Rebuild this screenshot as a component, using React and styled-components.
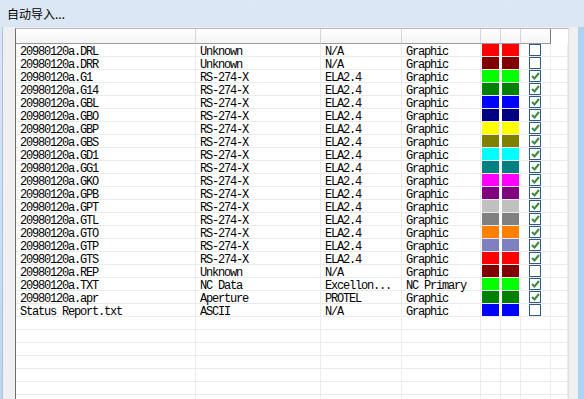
import React from "react";
import styled, { createGlobalStyle } from "styled-components";

const GlobalStyle = createGlobalStyle`
  html, body {
    margin: 0;
    padding: 0;
    background: #ffffff;
  }
`;

const COLS = "180px 125px 81px 79px 20px 20px 30px 1fr";

const Window = styled.div`
  width: 584px;
  height: 399px;
  overflow: hidden;
  display: flex;
  flex-direction: column;
  background: linear-gradient(#dde8f5, #c0d5ec);
`;

const TitleBar = styled.div`
  height: 27px;
  flex: 0 0 auto;
  padding-left: 7px;
  font-family: "Noto Sans CJK SC", "Noto Sans", sans-serif;
  font-size: 12px;
  line-height: 28px;
  color: #000;
`;

const Frame = styled.div`
  flex: 1;
  display: flex;
  min-height: 0;
  margin-left: 2px;
  border-left: 1px solid #a8c3e2;
  border-right: 6px solid #a9d4f3;
  background: #f0f0f0;
  padding: 1px 9px 0 12px;
`;

const ListBox = styled.div`
  flex: 1;
  display: flex;
  flex-direction: column;
  background: #ffffff;
  border-left: 1px solid #6e6e6e;
  border-top: 1px solid #b5b5b5;
  border-right: 1px solid #e0e0e0;
  overflow: hidden;
  font-family: "Liberation Mono", "DejaVu Sans Mono", monospace;
  font-size: 12px;
  letter-spacing: -1.2px;
  color: #000;
`;

const Header = styled.div`
  display: grid;
  grid-template-columns: ${COLS};
  height: 15px;
  flex: 0 0 auto;
  background: linear-gradient(#ffffff, #f3f4f6);
`;

const HeaderCell = styled.div`
  border-bottom: 1px solid ${({ $blank }) => ($blank ? "transparent" : "#9a9a9a")};
  background: ${({ $blank }) => ($blank ? "#ffffff" : "transparent")};
  border-right: 1px solid
    ${({ $blank, $last }) => ($blank ? "transparent" : $last ? "#7a7a7a" : "#d5d5d5")};
`;

const Row = styled.div`
  display: grid;
  grid-template-columns: ${COLS};
  grid-template-rows: 12px;
  height: 13px;
  flex: 0 0 auto;
  box-sizing: border-box;
  border-bottom: 1px solid #ebebeb;
`;

const Cell = styled.div`
  border-right: 1px solid #ebebeb;
  padding-left: 4px;
  white-space: nowrap;
  line-height: 17px;
  height: 12px;
`;

const SwatchCell = styled.div`
  padding: 0 1px;
  border-right: 1px solid #ffffff;
`;

const Swatch = styled.div`
  height: 12px;
  background: ${({ $color }) => $color};
`;

const CheckCell = styled.div`
  border-right: 1px solid #ebebeb;
  padding-left: 8px;
  display: flex;
  align-items: flex-start;
`;

const Box = styled.div`
  width: 10px;
  height: 10px;
  border: 1px solid #2f5a86;
  background: #fff;
  display: flex;
  align-items: center;
  justify-content: center;
`;

const Check = () => (
  <svg width="9" height="8" viewBox="0 0 9 8">
    <polyline
      points="1,4 3.5,6.5 8,1"
      fill="none"
      stroke="#3b8b3b"
      strokeWidth="2"
    />
  </svg>
);

const rs = (ext, color) => [
  `20980120a.${ext}`,
  "RS-274-X",
  "ELA2.4",
  "Graphic",
  color,
  true,
];

const files = [
  ["20980120a.DRL", "Unknown", "N/A", "Graphic", "#ff0000", false],
  ["20980120a.DRR", "Unknown", "N/A", "Graphic", "#800000", false],
  rs("G1", "#00ff00"),
  rs("G14", "#008000"),
  rs("GBL", "#0000ff"),
  rs("GBO", "#000080"),
  rs("GBP", "#ffff00"),
  rs("GBS", "#808000"),
  rs("GD1", "#00ffff"),
  rs("GG1", "#008080"),
  rs("GKO", "#ff00ff"),
  rs("GPB", "#800080"),
  rs("GPT", "#c0c0c0"),
  rs("GTL", "#808080"),
  rs("GTO", "#ff8000"),
  rs("GTP", "#8080c0"),
  rs("GTS", "#ff0000"),
  ["20980120a.REP", "Unknown", "N/A", "Graphic", "#800000", false],
  ["20980120a.TXT", "NC Data", "Excellon...", "NC Primary", "#00ff00", true],
  ["20980120a.apr", "Aperture", "PROTEL", "Graphic", "#008000", true],
  ["Status Report.txt", "ASCII", "N/A", "Graphic", "#0000ff", false],
];

const EMPTY_ROWS = 8;

const App = () => {
  return (
    <>
      <GlobalStyle />
      <Window>
        <TitleBar>自动导入...</TitleBar>
        <Frame>
          <ListBox>
            <Header>
              <HeaderCell />
              <HeaderCell />
              <HeaderCell />
              <HeaderCell />
              <HeaderCell />
              <HeaderCell />
              <HeaderCell $last />
              <HeaderCell $blank />
            </Header>
            {files.map(([name, type, ver, layer, color, on]) => (
              <Row key={name}>
                <Cell>{name}</Cell>
                <Cell>{type}</Cell>
                <Cell>{ver}</Cell>
                <Cell>{layer}</Cell>
                <SwatchCell>
                  <Swatch $color={color} />
                </SwatchCell>
                <SwatchCell>
                  <Swatch $color={color} />
                </SwatchCell>
                <CheckCell>
                  <Box>{on && <Check />}</Box>
                </CheckCell>
                <Cell />
              </Row>
            ))}
            {Array.from({ length: EMPTY_ROWS }).map((_, i) => (
              <Row key={"e" + i}>
                <Cell />
                <Cell />
                <Cell />
                <Cell />
                <Cell />
                <Cell />
                <Cell />
                <Cell />
              </Row>
            ))}
          </ListBox>
        </Frame>
      </Window>
    </>
  );
};

export default App;
